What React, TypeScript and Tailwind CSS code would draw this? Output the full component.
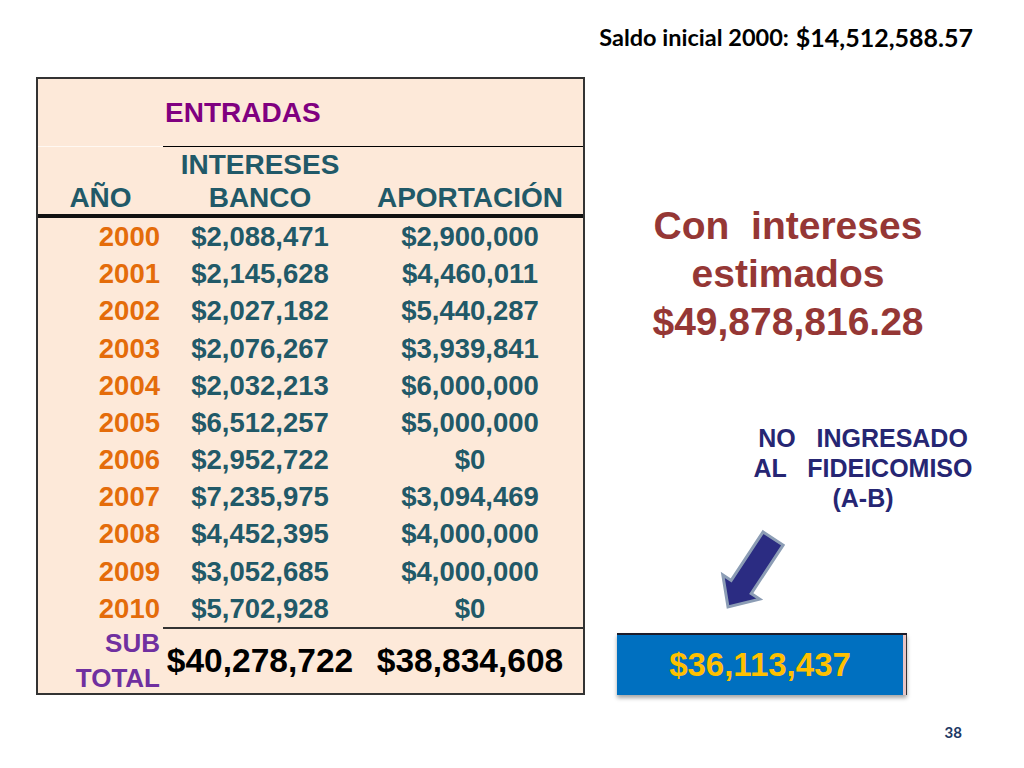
import React from "react";

const rows = [
	["2000", "$2,088,471", "$2,900,000"],
	["2001", "$2,145,628", "$4,460,011"],
	["2002", "$2,027,182", "$5,440,287"],
	["2003", "$2,076,267", "$3,939,841"],
	["2004", "$2,032,213", "$6,000,000"],
	["2005", "$6,512,257", "$5,000,000"],
	["2006", "$2,952,722", "$0"],
	["2007", "$7,235,975", "$3,094,469"],
	["2008", "$4,452,395", "$4,000,000"],
	["2009", "$3,052,685", "$4,000,000"],
	["2010", "$5,702,928", "$0"],
];

function Arrow() {
	return (
		<svg width="72" height="84" viewBox="0 0 72 84" className="block">
			<polygon
				points="43.1,3.9 63.1,17.1 31.2,65.6 39.6,71.1 8,79 2.8,46.9 11.2,52.4"
				fill="#2b2c82"
				stroke="#8c9db5"
				strokeWidth="3"
				strokeLinejoin="miter"
			/>
		</svg>
	);
}

function Table() {
	return (
		<div className="w-[549px] border-2 border-[#333] bg-[#fde9d9] grid grid-cols-[125px_194px_1fr] font-bold">
			{/* ENTRADAS */}
			<div className="h-[68px] border-b border-[#fff8f2]" />
			<div className="col-span-2 h-[68px] border-b border-black flex items-center pl-[2px] text-[28px] text-[#800080]">
				ENTRADAS
			</div>

			{/* column headers */}
			<div className="h-[67px] flex items-end justify-center text-[28px] leading-[33px] text-[#215968]">
				AÑO
			</div>
			<div className="h-[67px] flex items-end justify-center text-center text-[28px] leading-[33px] text-[#215968]">
				INTERESES
				<br />
				BANCO
			</div>
			<div className="h-[67px] flex items-end justify-center text-[28px] leading-[33px] text-[#215968]">
				APORTACIÓN
			</div>
			<div className="col-span-3 h-[4px] bg-[#111]" />

			{rows.map(([year, banco, aport]) => (
				<React.Fragment key={year}>
					<div className="h-[37.2px] flex items-center justify-end pr-[3px] text-[27.5px] text-[#e46c0a]">
						{year}
					</div>
					<div className="h-[37.2px] flex items-center justify-center text-[27.5px] text-[#215968]">
						{banco}
					</div>
					<div className="h-[37.2px] flex items-center justify-center text-[27.5px] text-[#215968]">
						{aport}
					</div>
				</React.Fragment>
			))}

			<div className="h-[2px]" />
			<div className="col-span-2 h-[2px] bg-[#333]" />

			{/* subtotal */}
			<div className="h-[64px] flex flex-col justify-center items-end pr-[3px] text-[26px] leading-[35px] text-[#7030a0]">
				<span>SUB</span>
				<span>TOTAL</span>
			</div>
			<div className="h-[64px] flex items-center justify-center text-[33.5px] text-black">
				$40,278,722
			</div>
			<div className="h-[64px] flex items-center justify-center text-[33.5px] text-black">
				$38,834,608
			</div>
		</div>
	);
}

export default function App() {
	return (
		<div className="w-[1024px] h-[768px] bg-white overflow-hidden font-['Liberation_Sans',Arial,sans-serif]">
			<div className="h-[77px] flex justify-end items-end pb-[25px] pr-[51px] font-['Lato',sans-serif] font-bold text-black">
				<span className="text-[23.5px] leading-[30px]">Saldo inicial 2000:</span>
				<span className="text-[25px] leading-[30px] ml-[7px]">$14,512,588.57</span>
			</div>

			<div className="flex">
				<div className="ml-[36px]">
					<Table />
				</div>

				<div className="flex-1 flex flex-col">
					<div className="mt-[125px] pr-[33px] text-center whitespace-pre text-[39px] leading-[48px] font-bold text-[#953735]">
						{"Con  intereses\nestimados\n$49,878,816.28"}
					</div>

					<div className="mt-[77px] ml-[138px] w-[280px] text-center whitespace-pre text-[25px] leading-[30px] font-bold text-[#262673]">
						{"NO   INGRESADO\nAL   FIDEICOMISO\n(A-B)"}
					</div>

					<div className="mt-[15px] ml-[135px]">
						<Arrow />
					</div>

					<div className="mt-[21px] ml-[32px] w-[290px] h-[62px] flex border-t-2 border-[#1c1c2a] shadow-[0_3px_4px_rgba(0,0,0,0.35)]">
						<div className="flex-1 bg-[#0070c0] flex items-center justify-center text-[33px] font-bold text-[#ffc000]">
							$36,113,437
						</div>
						<div className="w-[4px] bg-[#e8c4c4] border-r border-[#333]" />
					</div>
				</div>
			</div>

			<div className="flex justify-end pr-[62px] mt-[27px] font-['Lato',sans-serif] font-bold text-[15px] leading-[20px] text-[#203864]">
				38
			</div>
		</div>
	);
}
